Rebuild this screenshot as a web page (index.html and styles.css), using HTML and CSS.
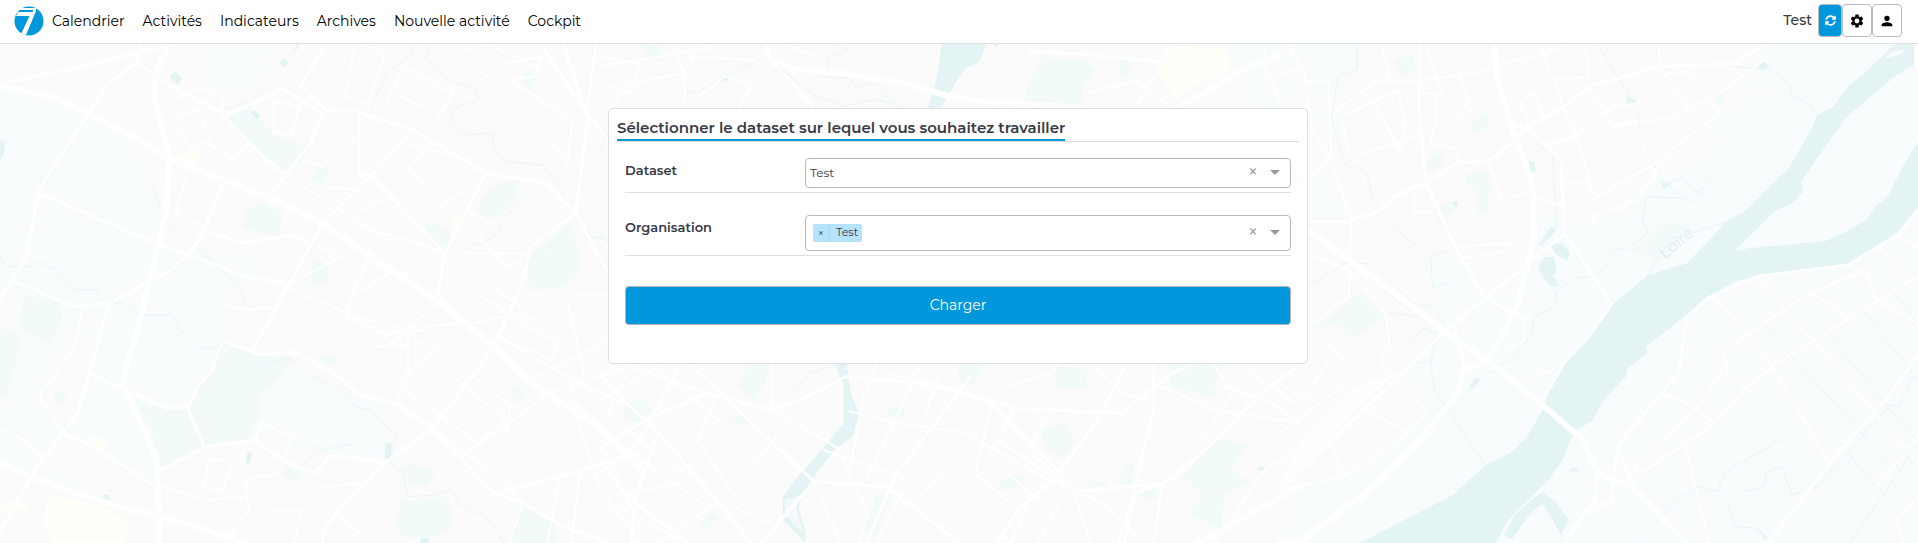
FILE: index.html
```html
<!DOCTYPE html>
<html lang="fr">
<head>
<meta charset="utf-8">
<title>Sélection du dataset</title>
<link rel="stylesheet" href="styles.css">
</head>
<body>
<svg class="map" viewBox="0 0 1918 543" preserveAspectRatio="xMidYMid slice" aria-hidden="true">
  <!-- west -->
  <g transform="matrix(.4082 0 0 .3333 0 40)">
    <path class="field" d="M0 150L100 170L210 215L290 240L345 400L385 520L400 600L480 625L590 655L650 660L640 700L540 770L540 905L520 980L480 1040L455 1105L330 1080L390 1290L380 1340L160 1180L220 1010L250 850L260 795L180 790L30 720V860L0 1390ZM0 860L0 1390L60 1330L160 1180L100 1120L95 1070L130 970L210 890L260 800L180 795L30 720L0 780ZM500 30L690 15L650 80L610 160L510 150Z M540 910L950 1100L955 1260L620 1200L500 1220Z M100 1290L200 1320L185 1380L70 1330Z"/>
    <path class="park" d="M555 230L610 205L680 290L760 320L740 370L700 405L640 350L600 285ZM600 510L640 490L695 515L680 590L595 565ZM770 395L800 370L810 395L790 435L762 420ZM60 765L145 785L155 850L120 915L45 860ZM0 865L55 885L20 1060L0 1070ZM330 1080L410 1110L460 1105L480 1070L490 1030L525 980L545 905L620 945L720 950L680 1020L640 1060L635 1130L610 1200L500 1225L390 1290L380 1200ZM765 670L780 655L805 680L800 730L760 735ZM1280 660L1400 550L1420 640L1418 700L1380 740L1300 752ZM1180 470L1240 420L1275 425L1260 480L1210 540L1170 520ZM1280 100L1300 85L1320 105L1300 145L1275 125ZM1040 555L1055 540L1115 590L1090 635L1055 600ZM980 1290L1010 1270L1070 1300L1040 1340L1010 1335ZM990 1380L1100 1370L1110 1450L1060 1500L980 1490L965 1440ZM1270 1400L1290 1395L1365 1460L1360 1509H1250ZM1250 1035L1290 1060L1275 1085L1255 1070ZM690 1300L700 1275L745 1300L725 1335ZM790 945L825 945L825 970L790 975ZM1520 1120L1568 1085V1160ZM135 1050L165 1065L155 1095L130 1085Z"/>
    <path class="yellow" d="M120 1360L250 1400L320 1450L300 1509H130L105 1450ZM440 350L465 335L500 335L470 390L440 390ZM0 1390L75 1385L60 1410L0 1420ZM1110 530L1135 530L1120 590L1108 580ZM220 1185L240 1185L265 1215L240 1245L222 1210ZM980 700L1000 690L1000 715L985 720Z"/>
    <path class="water" d="M0 300L12 305L10 345L0 360ZM418 105L430 97L447 115L435 133L420 120ZM685 65L697 55L708 70L693 82ZM612 215L625 212L638 228L630 240ZM605 1240L618 1235L610 1275L602 1270ZM250 1365L265 1365L272 1378L255 1378ZM945 1210L960 1210L957 1260L942 1255ZM1030 1495H1050V1509H1030ZM725 12H735L722 40Z"/>
    <path class="stream" d="M730 12L695 70L612 185L548 208M1015 12L1010 40L945 105L908 208M1055 12L1040 50L1070 95L1115 130L1165 145L1175 180L1110 205L1105 240L1135 285L1205 280L1210 325L1240 365L1330 375L1360 420L1405 530L1450 590L1490 602M0 650L15 680L80 680L95 665L140 690L185 750L235 750L260 795L300 785L335 825L425 825L440 870L500 930L545 910L600 935L640 975L710 955L760 1010L820 1035L870 1100L910 1110L970 1190L955 1265L985 1300L1000 1370L1060 1365L1110 1348L1125 1395L1190 1430L1235 1509M370 425L405 540L590 740L602 800M615 1045L640 975M745 1275L780 1215L790 1230L865 1212M1290 665L1370 600L1400 550M1290 475L1245 520L1210 590L1135 632"/>
    <path class="road major" d="M0 142L120 165L215 218L300 270L410 355L550 420L700 495L790 550L930 665L1075 785L1210 920L1280 1010L1470 1165L1568 1280M415 12L380 100V180L415 350L405 530L340 850L300 1030L385 1260L390 1509M0 1270L160 1350L300 1405L380 1425L560 1490L600 1509"/>
    <path class="road" d="M0 132L180 85L345 35L430 12M345 12L335 65L420 140L540 215L640 345L700 405L760 310L790 220L690 145L620 190L545 230M335 65L260 140L215 225L95 450L65 650L0 780M800 12L735 140L800 210L870 215L1010 270L1190 400L1340 430L1410 520L1300 620L1280 730L1210 920L1060 1165L935 1275L795 1460L790 1509M1325 12L1420 190L1490 300M1380 12L1440 240L1410 520L1490 700M700 405L660 465M910 405L790 550L620 930M910 405L1090 640L1070 780M1190 400L1090 640M550 420L500 570L470 630L420 690L355 730L265 795L220 1000L190 1120L80 1300L0 1480M545 905L640 945L720 935L820 1000L880 1065L980 1095L1060 1165L1210 1360L1280 1390L1380 1460L1490 1509M545 905L520 990L485 1040L460 1105L410 1105L300 1045L220 1000M460 1105L500 1220L395 1290M500 1220L625 1200L700 1265L770 1300L810 1245L940 1265M500 570L600 610L710 585L750 605M105 465L380 610L540 680L600 710L700 730M30 720L180 800L265 790M150 1180L230 1220L385 1345M1210 1360L1310 1330L1568 1240M1470 1165L1400 1080"/>
    <path class="lane" d="M1460 12L1435 240M1340 285L1390 370L1400 250M1140 30L1200 12L1240 40M1180 120L1230 70L1330 50L1310 110L1250 120L1350 200L1390 230M430 180L490 140L550 175L540 230M430 240L480 205L520 300L470 330L430 250M510 310L570 360L610 310M460 400L430 520L500 560M670 285L670 180L735 200L710 290L670 270M870 12L845 170L900 195L945 40L890 12M945 190L990 80L1110 160L1070 235M980 170L1045 205M880 220L880 400L910 405L1010 270M740 360L790 380L870 290M700 405L910 570L1000 600L1090 640M800 440L880 450M780 620L835 650L700 740L870 830L1000 870L1000 1000L970 1090L1010 1135M850 830L860 770L955 700L900 660L860 770M535 790L610 810L665 800M200 820L180 930L95 1070L160 1185M0 1165L60 1200L110 1260M640 1150L720 1190L690 1260L625 1200ZM510 1260L570 1265L545 1350L500 1345ZM600 1320L610 1410L560 1500M600 1320L680 1300M400 1340L510 1380L600 1370M665 1410L740 1410L720 1509M790 1340L900 1330L935 1275M820 1420L910 1509M1075 785L960 910L940 880L850 830M1000 860L1160 850L1270 820L1300 840L1568 840M1250 830L1370 910L1350 960L1220 890L1450 1050L1568 1110M1400 770L1490 760V900L1400 960L1310 1010L1270 1010M1390 780L1430 1000L1370 1100M1075 920L970 1030L1170 1210L1240 1140L1070 970M1060 1165L1240 1330L1280 1390L1250 1509M1130 1250L1350 1060M1160 1010L1250 1100L1240 1180M1568 970L1230 1110M1400 1080L1470 1350L1568 1509M1370 1320L1340 1509M1420 1300L1400 1509M1470 1200L1568 1460M930 880L1050 870M920 920L1040 910M1140 640L1290 640M1180 600L1240 680L1290 660M1140 510L1200 550L1170 600M1150 440L1080 500L1000 380L1060 310M1000 310L1150 360M870 550L950 600L980 600M880 510L940 480M1200 740L1280 800M1170 760L1240 820"/>
  </g>
  <!-- centre -->
  <g transform="matrix(.4464 0 0 .3333 600 40)">
    <path class="field" d="M1380 12H1568V205H1470L1430 100Z"/>
    <path class="park" d="M990 50L1080 60L1110 90L1080 150L1085 203H950L955 150ZM95 12H140L135 60L100 50ZM1160 60L1180 50L1195 95L1165 115ZM335 972H380L370 1030L345 1080L305 1035ZM50 1105L90 1070L120 1115L85 1165ZM290 1150L325 1110L335 1155ZM985 1165L1045 1150L1065 1210L1035 1260L995 1220ZM1280 972H1400L1370 1070L1275 1040ZM1020 975L1090 990V1040H1018ZM1300 1300L1390 1195L1450 1215L1415 1290L1460 1330L1400 1360L1390 1470L1320 1420L1350 1370ZM620 1355L655 1360L620 1485L595 1470ZM805 975L865 972L830 1045L800 1020ZM900 1320L950 1305L940 1340L885 1360ZM1170 1280L1195 1270V1330L1165 1340ZM1205 1350L1250 1350L1245 1385L1205 1370ZM220 1460L250 1415L270 1435L235 1470ZM645 1100H680V1130H645ZM1100 1320L1135 1325V1340H1095Z"/>
    <path class="yellow" d="M1285 12L1400 20L1415 80L1380 120L1340 125L1290 180L1250 95Z"/>
    <path class="water" d="M765 12H865L850 65L820 85L795 130L785 155L765 203H735L755 110ZM525 972H553L560 1050L580 1125L565 1190L525 1230L480 1310L455 1360L445 1405L460 1470V1509L410 1440V1370L440 1315L490 1240L545 1150V1030Z"/>
    <path class="park" d="M415 1380L450 1365L440 1410L455 1480L415 1425Z"/>
    <path class="water" d="M265 120L290 105L285 120L262 130ZM1470 1285L1490 1280L1485 1295ZM880 12H895L885 22Z"/>
    <path class="stream" d="M190 145L215 160L285 105L355 60M375 55L480 165L545 198L620 178L690 203M500 110L560 115L575 145L610 130L655 185M360 12L395 90L440 120M520 12L560 30L510 50V110M435 1050L470 1000L530 972M15 290L0 340M0 580L20 610"/>
    <path class="road major" d="M370 12L380 55L430 85L570 105L680 130L800 175L910 190L1090 203M1568 12L1440 90L1300 203M1568 1340L1340 1509"/>
    <path class="road" d="M160 12L190 100V203M375 55L440 140L480 203M965 20V35L1080 42L1250 65L1285 12M0 1225L100 1140L240 1060L385 1110L450 1080L550 1010L720 1030L870 1080L930 1105L1010 1110L1170 1120L1280 1000L1330 972M200 972L480 1325L360 1509M480 1325L640 1340L760 1460L800 1509M600 1500L660 1310L830 1010M130 1175L80 1370L70 1509M0 1000L60 1090L130 1175L340 1509M0 1260L60 1370L200 1509M1240 972V1110L1205 1300L1175 1509M1180 972L1110 1150L1020 1310L930 1420L890 1509M870 1080L1070 1355L1260 1330L1310 1290L1500 1040L1568 975M1400 1040L1500 1085L1568 1150M1160 1509L1200 1360L1260 1330"/>
    <path class="lane" d="M0 50L90 70L70 160L0 130M30 203L60 130L190 100M0 80L260 20L230 12M200 50L350 60M215 12L200 80M210 180L280 110L340 140L310 203M410 12L480 45M1200 203L1260 70M1095 160L1200 120L1280 203M1490 12V80L1530 203M0 1080L140 972M50 972L240 1060M60 1000L20 1120L150 1270L240 1330M130 990L310 1190M180 972L90 1200L0 1300M260 1070L220 1200L310 1390M30 1200L230 1390M340 1280L420 1150M385 972V1110L540 1230M560 1115L670 1150L820 1180M500 1230L680 1310M620 972L590 1070L560 1290M640 1000L830 1060M720 972L600 1310M700 1000L840 1180L700 1400M760 1000L720 1150M820 1180L990 1310L1110 1380M880 1080L840 1300L920 1390M930 1105L870 1250L980 1380M1010 1110L960 1230L1060 1350M910 1040L1010 1000L1030 972M1110 980L1170 1060L1240 1080M1240 1030L1380 1110L1568 1150M1370 972L1420 1050L1350 1200M1430 972L1568 1100M1470 1060L1400 1180L1300 1290M890 1200L1060 1350L1100 1509M840 1400L920 1509M960 1390L920 1509M1030 1390L980 1509M1070 1360L1140 1400L1210 1509M1260 1330L1240 1509M1380 1509L1480 1300L1568 1220M540 1250L600 1420L580 1509M490 1360L540 1509M680 1350L620 1509M20 1370L190 1330M40 1400L190 1509M130 1509L260 1390M300 1400L380 1450"/>
  </g>
  <!-- east -->
  <g transform="matrix(.4069 0 0 .3333 1280 40)">
    <path class="field" d="M1195 12H1568V1509H0L60 1340L180 1300L280 1210L360 1110L290 1000L370 900L380 800L370 660L440 650L520 770L620 640L620 560L680 500L700 570L790 530L900 430L1020 370L1085 320L1065 240L1100 200L1190 160L1130 110ZM45 12H125L190 12V90L145 105L125 205L0 140V30ZM68 210H150L120 350L175 430L160 540L68 530Z"/>
    <path class="park" d="M280 60L325 42L335 90L300 110L285 90ZM90 860L195 755L260 830L175 900L140 850ZM470 250L510 215V265L480 280L465 270ZM360 365L395 330L405 370L380 395L360 390ZM460 400L515 390L520 440L505 520L485 520L480 450L455 430ZM380 500L430 480L435 500L400 545H385ZM1070 165L1095 155L1090 190L1070 190ZM870 630L940 550L1010 555L950 650L920 660Z"/>
    <path class="water" d="M1510 12H1568V65L1510 110L1450 170L1390 235L1280 425L1285 455L1260 490L1215 515L1115 635L1150 625L1340 603L1385 580L1440 540L1460 505L1495 465L1530 380L1568 305V500L1515 580L1395 675L1170 710L1115 725L1050 775L900 920L902 940L855 985L850 1010L795 1080L768 1140L727 1175L710 1210L697 1255L660 1320L560 1440L530 1509H195L425 1365L505 1275L565 1240L605 1195L650 1100L655 1070L700 965L755 895L815 795L910 700L1090 548L1145 512L1250 385L1305 270L1320 225L1360 200L1395 140L1440 95Z"/>
    <path class="field" d="M905 705L1000 670L1090 555L1080 550L940 660ZM1485 55L1505 35L1540 28L1520 45ZM645 1385L675 1440L690 1485L650 1509H575Z"/>
    <path class="water" d="M550 1485L580 1420L645 1355L680 1390L710 1440L690 1485L675 1450L645 1390L610 1430L570 1498ZM635 680L650 650H672L680 690L670 705L687 737L665 740L640 700ZM665 610L695 612L713 640L705 663L675 640ZM850 165L880 185L855 198ZM1185 62L1203 78L1185 92L1175 80ZM610 362L625 367L630 395H615ZM665 560L680 570L645 615H635ZM920 400L935 425L965 430L945 448ZM465 1040L485 1010L490 1020L475 1048ZM420 485L437 485L435 508ZM710 1295L722 1280L737 1295ZM1170 1460L1200 1495L1190 1500Z"/>
    <path class="stream" d="M190 12V90L145 105L125 230L160 375L210 390L230 480L310 595L370 650L445 620M370 650L375 745L415 730L450 690M68 740L160 670L220 670L330 790L370 800L410 860M240 740L390 870M255 815L340 830M310 935L350 865L385 880L370 970L380 1050L505 1275M780 12L860 170L885 245L880 290L945 430L990 412L1020 450L1075 505M945 430L1010 485L1070 405M1000 475L900 470L890 540L905 580L855 625L825 628L780 710L725 713L680 755L675 800L625 830L620 880L575 950L500 1010L445 1075M1100 545L960 600L860 780M625 305L670 350L680 560M1115 80L1205 88L1260 140L1255 165L1300 190L1320 225M1185 850L1500 1275M1435 815L1568 1020M1350 885L1520 1140L1568 1200M1510 760L1568 850M880 1509L975 1380L1030 1340L1075 1355L1090 1300L1250 1185M1135 1355L1190 1340L1195 1295L1230 1280L1260 1365L1320 1340L1500 1095L1520 1100L1555 1010M1100 1390L1120 1460L1170 1465M1390 1230L1460 1340M1568 1210L1480 1370L1400 1509M340 970L370 960"/>
    <path class="road major" d="M68 570L165 655L400 870L510 960L650 1100L745 1200L780 1300L870 1345L1000 1509M525 12L535 120L570 260L620 430L625 590L580 810L510 960M0 1509H40L200 1370L330 1220L430 1070L455 990L510 960"/>
    <path class="road" d="M345 12L340 200L360 430L430 620L500 770L600 835L600 900L560 930M68 545H165L250 510L275 475L360 425L435 370L520 360L575 300L610 260L700 200L760 140L850 110L930 80L1115 70L1195 12M610 260L690 360L700 580L815 795L755 895L700 965L650 1070M575 250L610 270M1568 510L1520 585L1395 675L1170 710L1050 775L1000 830L980 1000L830 1215L870 1345M830 1215L815 1380L740 1430L700 1509M780 1300L775 1380L740 1430M1568 950L1480 1090L1350 1270L1200 1509M0 1350L180 1140L410 870L620 660L700 580M430 870L455 990"/>
    <path class="rail" d="M0 1330L60 1190L180 1040L290 1000L180 1110L70 1280Z"/>
    <path class="lane" d="M20 12L60 100L80 270L125 370L175 530L170 770L68 860M0 100L50 90M65 125L120 120L125 350L68 420M130 220L240 120L330 125L520 90M150 230L170 350L350 285M215 160L300 330M150 230L290 150L310 270L290 330L240 205M250 12L270 120M350 160H385V230L370 310L440 330L435 370M440 100L465 180L440 230L470 210M360 30L400 160M540 75L650 40L710 12M640 12L690 180L730 300L770 460M590 185L625 155L650 235L610 250ZM750 12L760 110L670 120M760 140L820 260L970 230L1080 160L1190 60M660 310L720 295L820 200L880 190L950 100L1000 95L1080 220L960 330L880 480L770 530L775 550M700 430H745L780 470L950 350M510 370L545 475L610 460L700 500M930 12L935 80L1000 200M820 260L870 240L925 420L830 510M330 460V515H370M430 620L565 610L560 635L440 655M68 640L170 690L260 820L270 920L250 930L250 970L330 1070L360 1110L320 1180L160 1310L0 1350M68 870L120 920L190 985L130 1060L0 1180M120 960L60 1080L0 1030M210 1110L320 1180M0 1270L120 1200L160 1310M610 1020L640 990L665 1000M1395 675L1440 700L1465 780L1568 850M1440 690L1300 760L1090 930L1100 1000L1145 1045L1060 1160L880 1305L870 1280L1020 1110L1100 970M1170 710L1330 930L1568 1270M1070 775L1190 940L1350 1270M1300 760L1350 790L1395 840M1568 710L1220 970L1145 1045M945 1065L1020 1100L1070 1155M1470 620L1540 720M1520 590L1568 620M995 1215L1055 1509M1568 1190L1450 1365M1568 1370L1515 1440L1530 1509"/>
  </g>
  <text class="river-name" transform="translate(1665 260) rotate(-41)">Loire</text>
</svg>

<header class="topbar">
  <nav class="nav">
    <a class="brand" href="#" aria-label="Accueil">
      <svg class="logo" viewBox="0 0 30 30"><circle cx="15" cy="15" r="14.5"/><path d="M7 2H22V5L12 29L7 28L15.500 10H2L4 6H18.500L19.500 4H6Z"/></svg>
    </a>
    <a href="#">Calendrier</a>
    <a href="#">Activités</a>
    <a href="#">Indicateurs</a>
    <a href="#">Archives</a>
    <a href="#">Nouvelle activité</a>
    <a href="#">Cockpit</a>
  </nav>
  <div class="tools">
    <span class="current">Test</span>
    <button class="tool tool-active" type="button" aria-label="Recharger"><svg viewBox="0 0 512 512"><path d="M370.7 133.300C339.500 104 298.900 88 255.800 88c-77.500 0-144.300 53.200-162.800 126.900-1.300 5.400-6.100 9.200-11.700 9.200H24.100c-7.500 0-13.200-6.800-11.800-14.200C33.900 94.900 134.800 8 256 8c66.400 0 126.800 26.100 171.300 68.700L463 41C478.100 25.900 504 36.600 504 57.900V192c0 13.300-10.700 24-24 24H345.900c-21.400 0-32.100-25.900-17-41zM32 296h134.100c21.400 0 32.100 25.900 17 41l-41.800 41.800c31.300 29.300 71.800 45.300 114.900 45.300 77.400-.1 144.300-53.200 162.800-126.800 1.300-5.400 6.100-9.200 11.700-9.200h57.300c7.500 0 13.200 6.800 11.800 14.200C478.100 417.100 377.200 504 256 504c-66.400 0-126.800-26.100-171.300-68.700L49 471c-15.100 15.100-41 4.400-41-16.900V320c0-13.300 10.700-24 24-24z"/></svg></button>
    <button class="tool" type="button" aria-label="Paramètres"><svg class="large" viewBox="0 0 24 24"><path d="M19.140 12.940c.04-.3.060-.61.060-.94s-.02-.64-.07-.94l2.030-1.580a.49.490 0 0 0 .12-.61l-1.920-3.320a.49.490 0 0 0-.59-.22l-2.390.96a7 7 0 0 0-1.620-.94L14.400 2.810a.48.480 0 0 0-.48-.41h-3.840a.47.470 0 0 0-.47.410L9.250 5.350a7.300 7.300 0 0 0-1.620.94l-2.390-.96a.48.480 0 0 0-.59.220L2.740 8.870a.47.470 0 0 0 .12.610l2.030 1.580a6 6 0 0 0 0 1.880l-2.030 1.580a.49.490 0 0 0-.12.610l1.920 3.320c.12.220.37.290.59.220l2.390-.96c.5.380 1.030.7 1.620.94l.36 2.540c.05.240.24.410.48.410h3.840c.24 0 .44-.17.470-.41l.36-2.540a7 7 0 0 0 1.620-.94l2.390.96c.22.080.47 0 .59-.22l1.920-3.320a.47.470 0 0 0-.12-.61zM12 15.600a3.600 3.600 0 1 1 0-7.200 3.600 3.600 0 0 1 0 7.200"/></svg></button>
    <button class="tool" type="button" aria-label="Profil"><svg class="large" viewBox="0 0 24 24"><path d="M12 12a4 4 0 1 0 0-8 4 4 0 0 0 0 8m0 2c-2.670 0-8 1.340-8 4v2h16v-2c0-2.660-5.330-4-8-4"/></svg></button>
  </div>
</header>
<div class="side-tab"></div>

<main class="page">
  <form class="card">
    <h1 class="card-head"><span>Sélectionner le dataset sur lequel vous souhaitez travailler</span></h1>
    <div class="fields">
      <div class="field-row">
        <label for="dataset">Dataset</label>
        <div class="picker">
          <select id="dataset"><option>Test</option></select>
          <button class="clear" type="button" aria-label="Effacer">×</button>
          <span class="arrow"></span>
        </div>
      </div>
      <div class="field-row field-row-multi">
        <label for="organisation">Organisation</label>
        <div class="picker picker-multi">
          <span class="tag"><button type="button" aria-label="Retirer Test">×</button><span>Test</span></span>
          <input id="organisation" type="text">
          <button class="clear" type="button" aria-label="Tout effacer">×</button>
          <span class="arrow"></span>
        </div>
      </div>
      <button class="submit" type="submit">Charger</button>
    </div>
  </form>
</main>
</body>
</html>
```

FILE: styles.css
```css
* { box-sizing: border-box; }

body {
  margin: 0;
  min-height: 100vh;
  background: #fbfbfb;
  color: #373a46;
  font-family: Montserrat, Inter, "Open Sans", sans-serif;
  font-size: 14px;
}

button, input, select { font: inherit; color: inherit; }

/* Map backdrop */
.map {
  position: fixed;
  inset: 0;
  z-index: -1;
  width: 100%;
  height: 100%;
}
.map path { stroke-linejoin: round; stroke-linecap: round; vector-effect: non-scaling-stroke; }
.field { fill: #f8fcfd; }
.park { fill: #f3fbfa; }
.yellow { fill: #fffef9; }
.water { fill: #e4f4f5; }
.rail { fill: #fefefe; }
.stream, .road, .lane { fill: none; }
.stream { stroke: #e9f6f6; stroke-width: 1px; }
.road { stroke: #fff; stroke-width: 3px; }
.road.major { stroke-width: 6px; }
.lane { stroke: #fff; stroke-width: 2px; }
.river-name { fill: #d8ecec; font-size: 16px; }

/* Top bar */
.topbar {
  display: flex;
  justify-content: space-between;
  align-items: center;
  height: 44px;
  padding: 0 16px 2px 14px;
  border-bottom: 1px solid #dee2e2;
  background: #fff;
}
.nav { display: flex; align-items: center; gap: 18px; }
.nav a { color: #000; text-decoration: none; white-space: nowrap; }
.nav .brand { display: flex; margin-right: -10px; }
.logo { width: 30px; height: 30px; }
.logo circle { fill: #0097dc; }
.logo path { fill: #fff; }

.tools { display: flex; align-items: center; }
.current { margin-right: 6px; padding-bottom: 2px; font-weight: 500; }
.tool {
  display: flex;
  justify-content: center;
  align-items: center;
  width: 30px;
  height: 33px;
  padding: 0;
  border: 1px solid #bbb;
  border-radius: 4px;
  background: #fff;
  color: #000;
}
.tool svg { width: 11px; height: 11px; fill: currentColor; }
.tool .large { width: 16px; height: 16px; }
.tool-active { width: 24px; background: #0097dc; color: #fff; }

.side-tab {
  position: absolute;
  top: 44px;
  right: 0;
  width: 4px;
  height: 28px;
  border-radius: 0 0 0 4px;
  background: #fff;
  box-shadow: 0 0 2px #ddd;
}

/* Dataset form */
.page { display: flex; justify-content: center; padding: 64px 16px; }
.card {
  width: 100%;
  max-width: 700px;
  margin-right: 2px;
  padding: 8px 8px 38px;
  border: 1px solid #dedfe1;
  border-radius: 5px;
  background: #fff;
}
.card-head {
  display: flex;
  margin: 0;
  border-bottom: 1px solid #dedfe1;
  font-size: 15px;
  font-weight: 600;
  line-height: 22px;
}
.card-head span { border-bottom: 2px solid #0097dc; }

.fields { padding: 16px 8px 0; }
.field-row {
  display: grid;
  grid-template-columns: 180px 1fr;
  margin-bottom: 22px;
  padding-bottom: 4px;
  border-bottom: 1px solid #dedfe1;
}
.field-row-multi { margin-bottom: 30px; }
.field-row label { padding-top: 4px; font-size: 13px; font-weight: 600; line-height: 16px; }
.picker {
  display: flex;
  align-items: center;
  height: 30px;
  padding: 0 10px 0 4px;
  border: 1px solid #b9b9b9;
  border-radius: 4px;
  background: #fff;
  font-size: 12px;
}
.picker-multi { height: 36px; padding-left: 7px; }
.picker select, .picker input {
  flex: 1;
  min-width: 0;
  padding: 0;
  border: 0;
  outline: 0;
  background: none;
  appearance: none;
}
.picker select { padding-bottom: 2px; }
.clear { padding: 0 0 2px; border: 0; background: none; color: #999; font-size: 18px; line-height: 20px; }
.arrow {
  margin: 0 0 2px 12px;
  border: 5px solid transparent;
  border-top-color: #999;
  border-bottom: 0;
}
.tag {
  display: flex;
  height: 18px;
  border-radius: 2px;
  background: #b5e3ff;
  font-size: 11px;
  line-height: 17px;
}
.tag button {
  width: 17px;
  padding: 0;
  border: 0;
  border-right: 1px solid #a6d9f9;
  background: none;
  line-height: 16px;
}
.tag span { padding: 0 4px 0 6px; }

.submit {
  width: 100%;
  height: 39px;
  padding-bottom: 3px;
  border: 1px solid #b3b3b3;
  border-radius: 4px;
  background: #0097dc;
  color: #fff;
}
```
